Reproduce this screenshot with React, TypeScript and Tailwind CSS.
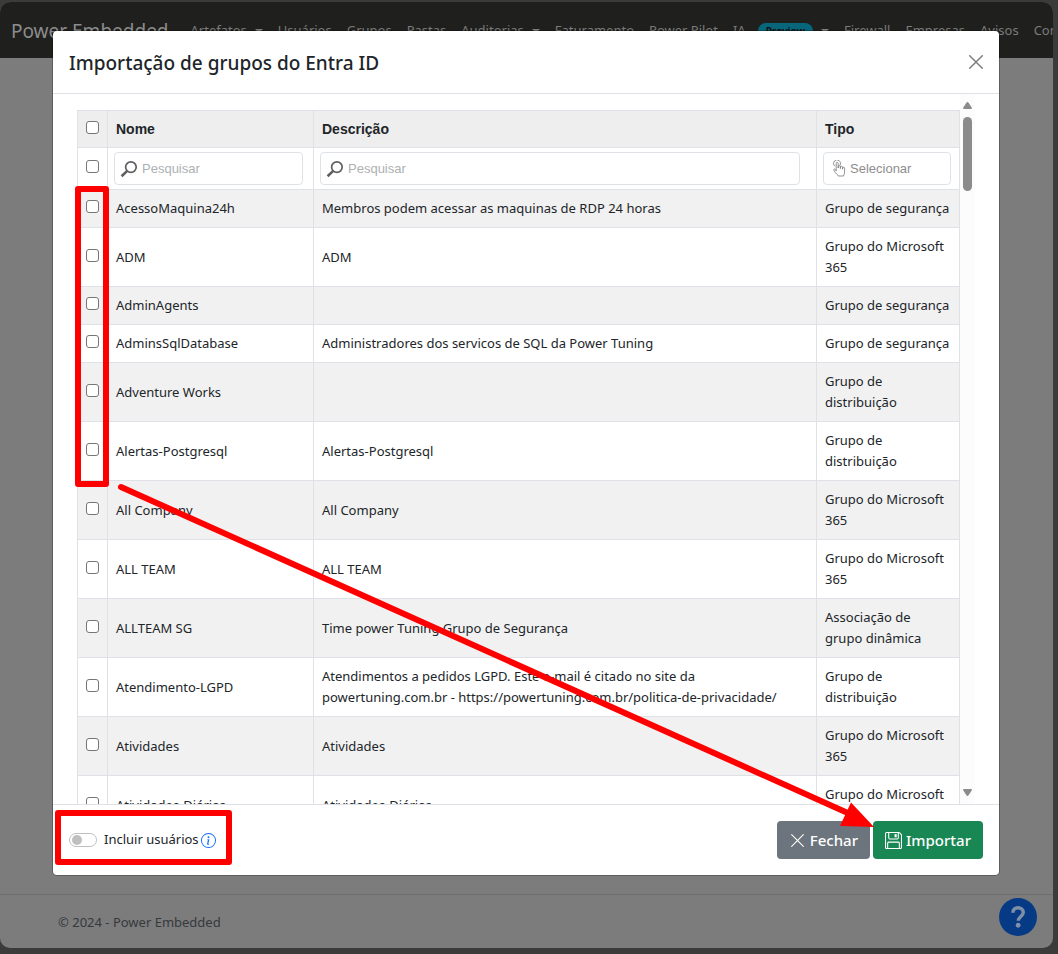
import React from "react";
import { BsXLg, BsFloppy, BsInfoCircle } from "react-icons/bs";

type Row = { nome: string; desc: string; tipo: string };

const rows: Row[] = [
  { nome: "AcessoMaquina24h", desc: "Membros podem acessar as maquinas de RDP 24 horas", tipo: "Grupo de segurança" },
  { nome: "ADM", desc: "ADM", tipo: "Grupo do Microsoft 365" },
  { nome: "AdminAgents", desc: "", tipo: "Grupo de segurança" },
  { nome: "AdminsSqlDatabase", desc: "Administradores dos servicos de SQL da Power Tuning", tipo: "Grupo de segurança" },
  { nome: "Adventure Works", desc: "", tipo: "Grupo de distribuição" },
  { nome: "Alertas-Postgresql", desc: "Alertas-Postgresql", tipo: "Grupo de distribuição" },
  { nome: "All Company", desc: "All Company", tipo: "Grupo do Microsoft 365" },
  { nome: "ALL TEAM", desc: "ALL TEAM", tipo: "Grupo do Microsoft 365" },
  { nome: "ALLTEAM SG", desc: "Time power Tuning Grupo de Segurança", tipo: "Associação de grupo dinâmica" },
  { nome: "Atendimento-LGPD", desc: "Atendimentos a pedidos LGPD. Este e-mail é citado no site da powertuning.com.br - https://powertuning.com.br/politica-de-privacidade/", tipo: "Grupo de distribuição" },
  { nome: "Atividades", desc: "Atividades", tipo: "Grupo do Microsoft 365" },
  { nome: "Atividades-Diárias", desc: "Atividades-Diárias", tipo: "Grupo do Microsoft 365" },
];

function Caret() {
  return <span className="ml-2 inline-block border-x-4 border-t-4 border-x-transparent border-t-current align-middle" />;
}

function NavItem({ label, badge, caret }: { label: string; badge?: string; caret?: boolean }) {
  return (
    <a href="#" className="flex shrink-0 items-center whitespace-nowrap">
      {label}
      {badge && <span className="ml-3 rounded-full bg-[#07667a] px-2 text-[10px] font-bold leading-4 text-[#101112]">{badge}</span>}
      {caret && <Caret />}
    </a>
  );
}

function Check({ label }: { label: string }) {
  return (
    <input
      type="checkbox"
      aria-label={label}
      className="block size-[13px] appearance-none rounded-[3px] border border-[#767676] bg-white checked:bg-[#0d6efd]"
    />
  );
}

function SearchBox({ label }: { label: string }) {
  return (
    <div className="mr-1 flex h-[33px] max-w-[480px] items-center gap-1 rounded border border-[#dee2e6] bg-white pl-[5px]">
      <svg viewBox="0 0 18 18" className="size-[18px] shrink-0" fill="none" stroke="#5f5f5f" aria-hidden="true">
        <circle cx="10.900" cy="7.100" r="5.300" strokeWidth="1.700" />
        <path d="M7.200 10.900L1.600 16.200" strokeWidth="2.600" />
      </svg>
      <input
        type="text"
        aria-label={label}
        placeholder="Pesquisar"
        className="w-full min-w-0 bg-transparent text-[13px] text-[#212529] outline-none placeholder:text-[#adb0b3]"
      />
    </div>
  );
}

function HandIcon() {
  return (
    <svg viewBox="0 0 14 17" className="h-[17px] w-[14px] shrink-0" fill="none" stroke="#777" strokeWidth="0.8" strokeLinecap="round" strokeLinejoin="round" aria-hidden="true">
      <path d="M4.200 10.500V3.400a1 1 0 0 1 2 0V8V6.600a1.100 1 0 0 1 2.200 .1V8.600V7.300a1.100 1 0 0 1 2.200 .1V9.200V8.300a1 1 0 0 1 2 0V12c0 2-1 2.600-1 4H6.200c0-1.300-1.700-1.600-2.700-3.200L1.800 10.200c-.5-1 .8-1.700 1.400-.9z" />
      <path d="M2.300 5.800a3.600 3.600 0 1 1 6 -.8" />
    </svg>
  );
}

const cell = "border border-[#dee2e6] px-2 py-2";
const checkCell = "border border-[#dee2e6] px-2 pt-1 pb-2";

export default function App() {
  return (
    <div className="relative flex min-h-screen flex-col overflow-hidden bg-[#3b3b3b] pb-1.5 pr-[5px] pt-0.5 font-['Noto_Sans','Open_Sans',sans-serif] text-[13px] text-[#212529]">
      <div className="flex grow flex-col overflow-hidden rounded-[10px] bg-[#7c7c7c]">
        <nav className="flex h-14 shrink-0 items-center overflow-hidden bg-[#1f1f1d] pl-[11px] pt-0.5 text-[#7b7b7b]">
          <a href="#" className="mr-[22px] shrink-0 text-[19px] text-[#8c8c8c]">Power Embedded</a>
          <div className="flex items-center gap-[15px]">
            <NavItem label="Artefatos" caret />
            <NavItem label="Usuários" />
            <NavItem label="Grupos" />
            <NavItem label="Pastas" />
            <NavItem label="Auditorias" caret />
            <NavItem label="Faturamento" />
            <NavItem label="Power Pilot" />
            <NavItem label="IA" badge="Preview" caret />
            <NavItem label="Firewall" />
            <NavItem label="Empresas" />
            <NavItem label="Avisos" />
            <NavItem label="Configurações" />
          </div>
        </nav>
        <main className="grow" />
        <footer className="flex h-[54px] shrink-0 items-center justify-between border-t border-[#6d6e6f] pl-[58px] pr-4 text-[#36393c]">
          <p className="pt-0.5">© 2024 - Power Embedded</p>
          <button type="button" aria-label="Ajuda" className="mb-[10px] flex size-[38px] items-center justify-center rounded-full bg-[#063a85] text-[#7f8fa8]">
            <svg viewBox="0 0 16 16" className="size-6" fill="none" stroke="currentColor" aria-hidden="true">
              <path d="M4.600 5.200C4.600 3 6 1.800 8 1.800s3.500 1.200 3.500 3.200c0 2.600-3.300 2.700-3.300 5.500" strokeWidth="2.300" />
              <circle cx="8.100" cy="13.500" r="1.600" fill="currentColor" stroke="none" />
            </svg>
          </button>
        </footer>
      </div>

      <div
        role="dialog"
        aria-modal="true"
        aria-labelledby="dialog-title"
        className="absolute bottom-[79px] left-[53px] right-[59px] top-[31px] flex flex-col rounded-[4px] bg-white shadow-[0_0_0_1px_rgba(0,0,0,0.25)]"
      >
        <header className="flex h-[63px] shrink-0 items-center justify-between border-b border-[#dee2e6] px-4">
          <h1 id="dialog-title" className="pt-0.5 text-[19px] font-medium">Importação de grupos do Entra ID</h1>
          <button type="button" aria-label="Fechar janela" className="text-[#7f7f7f]">
            <svg viewBox="0 0 14 14" className="size-[14px]" fill="none" stroke="currentColor" strokeWidth="1.500" strokeLinecap="round" aria-hidden="true">
              <path d="M.7 .7L13.300 13.300M13.300 .7L.7 13.300" />
            </svg>
          </button>
        </header>

        <div className="flex min-h-0 grow justify-between px-6">
          <div className="min-h-0 grow overflow-hidden pt-4">
            <table className="w-full table-fixed border-collapse text-left leading-[21px]">
              <colgroup>
                <col className="w-[30px]" />
                <col className="w-[206px]" />
                <col />
                <col className="w-[143px]" />
              </colgroup>
              <thead>
                <tr className="bg-[#eeeeee] font-['Liberation_Sans',sans-serif] text-[14px] leading-5">
                  <th className={checkCell}><Check label="Selecionar todos" /></th>
                  <th className={cell}>Nome</th>
                  <th className={cell}>Descrição</th>
                  <th className={cell}>Tipo</th>
                </tr>
                <tr className="font-['Liberation_Sans',sans-serif]">
                  <td className={checkCell}><Check label="Selecionar filtrados" /></td>
                  <td className="border border-[#dee2e6] px-1.5 py-1"><SearchBox label="Pesquisar nome" /></td>
                  <td className="border border-[#dee2e6] px-1.5 py-1"><SearchBox label="Pesquisar descrição" /></td>
                  <td className="border border-[#dee2e6] px-1.5 py-1">
                    <button type="button" className="flex h-[33px] w-32 items-center gap-1 rounded border border-[#dee2e6] bg-white pl-2 text-[#8d8d8d]">
                      <HandIcon />
                      Selecionar
                    </button>
                  </td>
                </tr>
              </thead>
              <tbody>
                {rows.map((r) => (
                  <tr key={r.nome} className="odd:bg-[#f1f1f1]">
                    <td className={checkCell}><Check label={r.nome} /></td>
                    <td className={cell}>{r.nome}</td>
                    <td className={cell}>{r.desc}</td>
                    <td className={cell}>{r.tipo}</td>
                  </tr>
                ))}
              </tbody>
            </table>
          </div>
          <div className="flex w-[15px] shrink-0 flex-col items-center justify-between bg-[#fcfcfc] py-2" aria-hidden="true">
            <div className="flex flex-col items-center gap-2">
              <svg viewBox="0 0 9 7" className="h-[7px] w-[9px]" fill="#8b8b8b"><path d="M4.500 0Q5.200 0 5.600 .7L9 6Q9 7 8 7H1Q0 7 0 6L3.400 .7Q3.800 0 4.500 0Z" /></svg>
              <div className="h-[74px] w-[9px] rounded-full bg-[#8b8b8b]" />
            </div>
            <svg viewBox="0 0 9 7" className="h-[7px] w-[9px]" fill="#8b8b8b"><path d="M4.500 7Q5.200 7 5.600 6.300L9 1Q9 0 8 0H1Q0 0 0 1L3.400 6.300Q3.800 7 4.500 7Z" /></svg>
          </div>
        </div>

        <footer className="flex h-[71px] shrink-0 items-center justify-between border-t border-[#dee2e6] px-4">
          <div className="flex items-center">
            <label className="flex items-center gap-[7px]">
              <input
                type="checkbox"
                role="switch"
                className="relative h-[14px] w-7 appearance-none rounded-full border border-[#bfbfbf] bg-white before:absolute before:left-0.5 before:top-px before:size-[10px] before:rounded-full before:bg-[#bfbfbf] checked:before:left-4"
              />
              Incluir usuários
            </label>
            <BsInfoCircle className="ml-0.5 size-[15px] text-[#0d6efd]" />
          </div>
          <div className="flex gap-[3px] text-[15px] font-medium text-white">
            <button type="button" className="flex h-[38px] items-center gap-1 rounded-[4px] bg-[#6c757d] px-3">
              <BsXLg className="size-[17px]" />
              Fechar
            </button>
            <button type="button" className="flex h-[38px] items-center gap-1 rounded-[4px] bg-[#198754] px-3">
              <BsFloppy className="size-[17px]" />
              Importar
            </button>
          </div>
        </footer>
      </div>

      <svg viewBox="0 0 1058 954" className="pointer-events-none absolute left-0 top-0 h-[954px] w-[1058px]" fill="none" stroke="#ff0000" aria-hidden="true">
        <rect x="78" y="189" width="28" height="295" strokeWidth="6" strokeLinejoin="round" />
        <rect x="58" y="813" width="171" height="49" strokeWidth="6" strokeLinejoin="round" />
        <path d="M121 487L850 814" strokeWidth="6" strokeLinecap="round" />
        <path d="M874 827L851 802.500L840 826Z" fill="#ff0000" stroke="none" />
      </svg>
    </div>
  );
}
